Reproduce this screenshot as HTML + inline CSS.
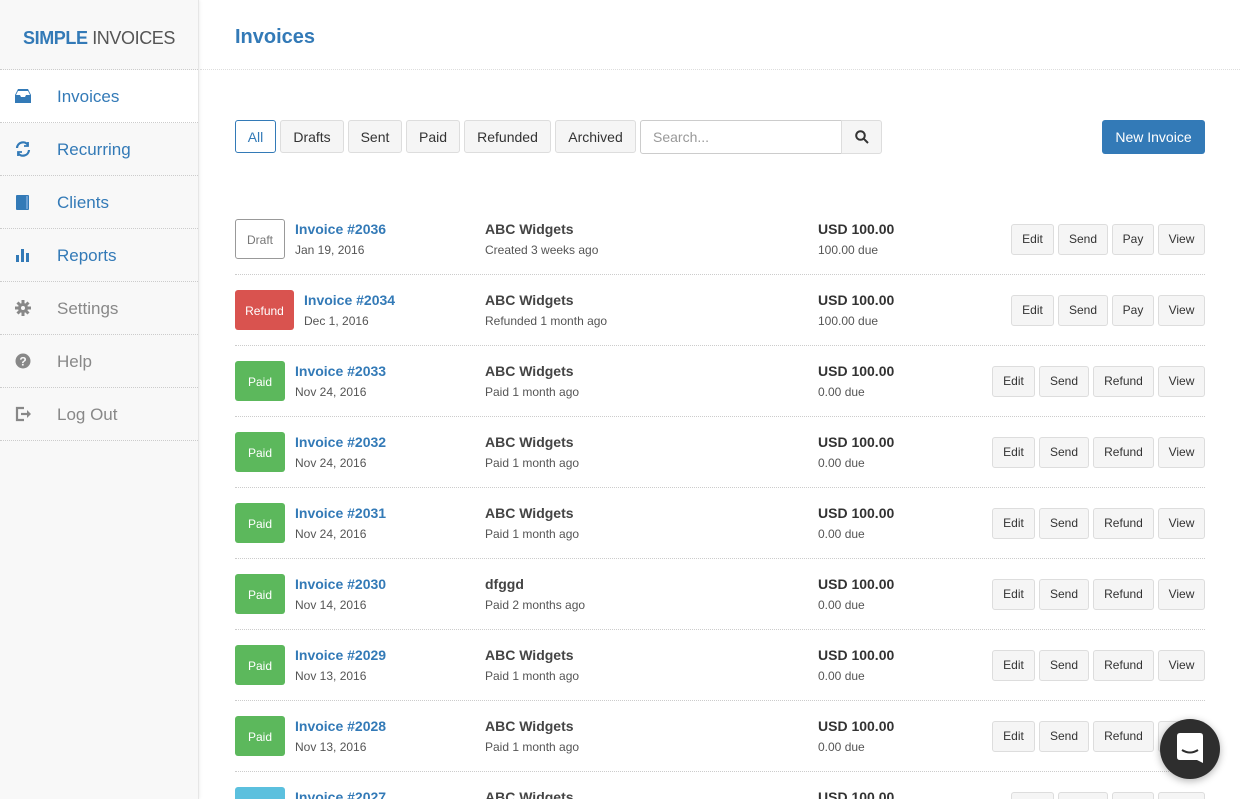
<!DOCTYPE html>
<html style="width:1240px;height:799px;overflow:hidden"><head><meta charset="utf-8"><style>
*{box-sizing:border-box;margin:0;padding:0}
body{width:1240px;height:799px;overflow:hidden;font-family:"Liberation Sans",Arial,sans-serif;background:#fff;position:relative;color:#333}
.side{position:absolute;left:0;top:0;width:199px;height:799px;background:#f8f8f8;border-right:1px solid #e6e6e6;box-shadow:1px 0 3px rgba(0,0,0,.06)}
.logo{height:70px;border-bottom:1px dotted #ccc;text-align:center;line-height:76px;font-size:18px;color:#555;letter-spacing:-.4px}
.logo b{color:#337ab7}
.nav{height:53px;border-bottom:1px dotted #ccc;position:relative;font-size:17px;line-height:54px;padding-left:57px;color:#337ab7}
.nav.g{color:#888}
.nav.act{background:#fff}
.nav svg{position:absolute;left:15px;top:18px}
.hdr{position:absolute;left:200px;top:0;right:0;height:70px;border-bottom:1px dotted #ddd}
.hdr h1{position:absolute;left:35px;top:26px;font-size:20px;color:#337ab7;font-weight:bold}
.btn{position:absolute;height:33px;border:1px solid #ddd;border-radius:3px;background:#f5f5f5;font-size:14px;line-height:33px;text-align:center;color:#333}
.search{position:absolute;left:640px;top:120px;width:202px;height:34px;border:1px solid #ccc;border-radius:3px 0 0 3px;font-size:14px;color:#999;padding-left:12px;line-height:32px}
.new{position:absolute;left:1102px;top:120px;width:103px;height:34px;background:#337ab7;border-radius:3px;color:#fff;font-size:14px;line-height:34px;text-align:center}
.row{position:absolute;left:235px;width:970px;height:71px;border-bottom:1px dotted #ccc}
.bd{position:absolute;top:0;height:40px;border-radius:3px;color:#fff;font-size:12px;text-align:center;line-height:42px}
.t{position:absolute;top:2px;font-size:14px;font-weight:bold;color:#337ab7}
.d{position:absolute;top:24px;font-size:12px;color:#555}
.c{position:absolute;left:250px;top:2px;font-size:14px;font-weight:bold;color:#444}
.a{position:absolute;left:583px;top:2px;font-size:14px;font-weight:bold;color:#333}
.rb{position:absolute;top:5px;height:31px;border:1px solid #ddd;border-radius:3px;background:#f5f5f5;font-size:12px;line-height:29px;text-align:center;color:#333}
.chat{position:absolute;left:1160px;top:719px;width:60px;height:60px;border-radius:50%;background:#2e2e2e;box-shadow:0 2px 8px rgba(0,0,0,.3)}
</style></head><body>
<div class="side">
<div class="logo"><b>SIMPLE</b> INVOICES</div>
<div class="nav act"><svg width="16" height="16" viewBox="0 0 16 16"><path d="M3 1h10l3 6v8H0V7z" fill="#337ab7"/><path d="M3 3h10l2 4h-4l-1 2H6L5 7H1z" fill="#fff"/></svg>Invoices</div>
<div class="nav"><svg width="16" height="16" viewBox="0 0 16 16" fill="none" stroke="#337ab7" stroke-width="2.2"><path d="M2 7a6 6 0 0 1 11-3M14 9a6 6 0 0 1-11 3"/><path d="M13 1v4H9M3 15v-4h4" stroke-width="1.8"/></svg>Recurring</div>
<div class="nav"><svg width="16" height="16" viewBox="0 0 16 16"><rect x="1" y="1" width="13" height="15" rx="1" fill="#337ab7"/><rect x="11" y="2" width="2" height="13" fill="#6aa0d4"/></svg>Clients</div>
<div class="nav"><svg width="16" height="16" viewBox="0 0 16 16" fill="#337ab7"><rect x="1" y="8" width="3" height="7"/><rect x="6" y="2" width="3" height="13"/><rect x="11" y="6" width="3" height="9"/></svg>Reports</div>
<div class="nav g"><svg width="16" height="16" viewBox="0 0 16 16"><circle cx="8" cy="8" r="5" fill="#888"/><path d="M8 0v16M0 8h16M2.5 2.5l11 11M13.5 2.5l-11 11" stroke="#888" stroke-width="3"/><circle cx="8" cy="8" r="2" fill="#f8f8f8"/></svg>Settings</div>
<div class="nav g"><svg width="16" height="16" viewBox="0 0 16 16"><circle cx="8" cy="8" r="7.5" fill="#888"/><text x="8" y="12.5" font-size="12" font-weight="bold" fill="#f8f8f8" text-anchor="middle" font-family="Liberation Sans">?</text></svg>Help</div>
<div class="nav g"><svg width="17" height="16" viewBox="0 0 17 16" fill="none" stroke="#888" stroke-width="2.2"><path d="M9 2H2v12h7"/><path d="M6 8h7" /><path d="M12 4l4 4-4 4z" fill="#888" stroke="none"/></svg>Log Out</div>
</div>
<div class="hdr"><h1>Invoices</h1></div>
<div class="btn" style="left:235px;top:120px;width:41px;border-color:#337ab7;background:#fff;color:#337ab7">All</div>
<div class="btn" style="left:280px;top:120px;width:64px">Drafts</div>
<div class="btn" style="left:348px;top:120px;width:54px">Sent</div>
<div class="btn" style="left:406px;top:120px;width:54px">Paid</div>
<div class="btn" style="left:464px;top:120px;width:87px">Refunded</div>
<div class="btn" style="left:555px;top:120px;width:81px">Archived</div>
<div class="search">Search...</div>
<div class="btn" style="left:841px;top:120px;width:41px;height:34px;border-radius:0 3px 3px 0;background:#f5f5f5"><svg width="14" height="14" viewBox="0 0 14 14" style="margin-top:9px;display:inline-block" fill="none" stroke="#333" stroke-width="2"><circle cx="5.5" cy="5.5" r="4.3"/><path d="M8.7 8.7L13 13"/></svg></div>
<div class="new">New Invoice</div>

<div class="row" style="top:219px;height:56px">
<div class="bd" style="left:0;width:50px;background:#fff;border:1px solid #999;color:#777;line-height:40px">Draft</div>
<div class="t" style="left:60px">Invoice #2036</div><div class="d" style="left:60px">Jan 19, 2016</div>
<div class="c">ABC Widgets</div><div class="d" style="left:250px">Created 3 weeks ago</div>
<div class="a">USD 100.00</div><div class="d" style="left:583px">100.00 due</div>
<div class="rb" style="left:776px;width:43px">Edit</div><div class="rb" style="left:823px;width:50px">Send</div><div class="rb" style="left:877px;width:42px">Pay</div><div class="rb" style="left:923px;width:47px">View</div>
</div>
<div class="row" style="top:290px;height:56px">
<div class="bd" style="left:0;width:59px;background:#d9534f">Refund</div>
<div class="t" style="left:69px">Invoice #2034</div><div class="d" style="left:69px">Dec 1, 2016</div>
<div class="c">ABC Widgets</div><div class="d" style="left:250px">Refunded 1 month ago</div>
<div class="a">USD 100.00</div><div class="d" style="left:583px">100.00 due</div>
<div class="rb" style="left:776px;width:43px">Edit</div><div class="rb" style="left:823px;width:50px">Send</div><div class="rb" style="left:877px;width:42px">Pay</div><div class="rb" style="left:923px;width:47px">View</div>
</div>

<div class="row" style="top:361px;height:56px"><div class="bd" style="left:0;width:50px;background:#5cb85c">Paid</div><div class="t" style="left:60px">Invoice #2033</div><div class="d" style="left:60px">Nov 24, 2016</div><div class="c">ABC Widgets</div><div class="d" style="left:250px">Paid 1 month ago</div><div class="a">USD 100.00</div><div class="d" style="left:583px">0.00 due</div><div class="rb" style="left:757px;width:43px">Edit</div><div class="rb" style="left:804px;width:50px">Send</div><div class="rb" style="left:858px;width:61px">Refund</div><div class="rb" style="left:923px;width:47px">View</div></div>
<div class="row" style="top:432px;height:56px"><div class="bd" style="left:0;width:50px;background:#5cb85c">Paid</div><div class="t" style="left:60px">Invoice #2032</div><div class="d" style="left:60px">Nov 24, 2016</div><div class="c">ABC Widgets</div><div class="d" style="left:250px">Paid 1 month ago</div><div class="a">USD 100.00</div><div class="d" style="left:583px">0.00 due</div><div class="rb" style="left:757px;width:43px">Edit</div><div class="rb" style="left:804px;width:50px">Send</div><div class="rb" style="left:858px;width:61px">Refund</div><div class="rb" style="left:923px;width:47px">View</div></div>
<div class="row" style="top:503px;height:56px"><div class="bd" style="left:0;width:50px;background:#5cb85c">Paid</div><div class="t" style="left:60px">Invoice #2031</div><div class="d" style="left:60px">Nov 24, 2016</div><div class="c">ABC Widgets</div><div class="d" style="left:250px">Paid 1 month ago</div><div class="a">USD 100.00</div><div class="d" style="left:583px">0.00 due</div><div class="rb" style="left:757px;width:43px">Edit</div><div class="rb" style="left:804px;width:50px">Send</div><div class="rb" style="left:858px;width:61px">Refund</div><div class="rb" style="left:923px;width:47px">View</div></div>
<div class="row" style="top:574px;height:56px"><div class="bd" style="left:0;width:50px;background:#5cb85c">Paid</div><div class="t" style="left:60px">Invoice #2030</div><div class="d" style="left:60px">Nov 14, 2016</div><div class="c">dfggd</div><div class="d" style="left:250px">Paid 2 months ago</div><div class="a">USD 100.00</div><div class="d" style="left:583px">0.00 due</div><div class="rb" style="left:757px;width:43px">Edit</div><div class="rb" style="left:804px;width:50px">Send</div><div class="rb" style="left:858px;width:61px">Refund</div><div class="rb" style="left:923px;width:47px">View</div></div>
<div class="row" style="top:645px;height:56px"><div class="bd" style="left:0;width:50px;background:#5cb85c">Paid</div><div class="t" style="left:60px">Invoice #2029</div><div class="d" style="left:60px">Nov 13, 2016</div><div class="c">ABC Widgets</div><div class="d" style="left:250px">Paid 1 month ago</div><div class="a">USD 100.00</div><div class="d" style="left:583px">0.00 due</div><div class="rb" style="left:757px;width:43px">Edit</div><div class="rb" style="left:804px;width:50px">Send</div><div class="rb" style="left:858px;width:61px">Refund</div><div class="rb" style="left:923px;width:47px">View</div></div>
<div class="row" style="top:716px;height:56px"><div class="bd" style="left:0;width:50px;background:#5cb85c">Paid</div><div class="t" style="left:60px">Invoice #2028</div><div class="d" style="left:60px">Nov 13, 2016</div><div class="c">ABC Widgets</div><div class="d" style="left:250px">Paid 1 month ago</div><div class="a">USD 100.00</div><div class="d" style="left:583px">0.00 due</div><div class="rb" style="left:757px;width:43px">Edit</div><div class="rb" style="left:804px;width:50px">Send</div><div class="rb" style="left:858px;width:61px">Refund</div><div class="rb" style="left:923px;width:47px">View</div></div>
<div style="position:absolute;left:0;top:0;width:1240px;height:799px;overflow:hidden;pointer-events:none">
<div class="row" style="top:787px;height:12px;border:none;overflow:hidden"><div class="bd" style="left:0;width:50px;background:#5bc0de"></div><div class="t" style="left:60px;top:2px">Invoice #2027</div><div class="c" style="top:2px">ABC Widgets</div><div class="a" style="top:2px">USD 100.00</div><div class="rb" style="left:776px;width:43px"></div><div class="rb" style="left:823px;width:50px"></div><div class="rb" style="left:877px;width:42px"></div><div class="rb" style="left:923px;width:47px"></div></div>
</div>
<div class="chat"><svg width="60" height="60" viewBox="0 0 60 60"><path d="M17 17q0-3 3-3h20q3 0 3 3v27l-6-3H20q-3 0-3-3z" fill="#fff"/><path d="M22 31q8 5 16 0" stroke="#2e2e2e" stroke-width="2" fill="none"/></svg></div>
</body></html>
